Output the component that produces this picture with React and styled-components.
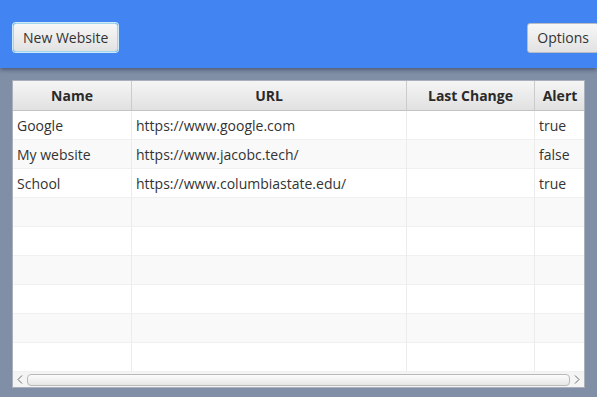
import React from "react";
import styled, { createGlobalStyle } from "styled-components";

const Global = createGlobalStyle`
  html, body { margin: 0; padding: 0; }
  body {
    width: 597px; height: 397px; overflow: hidden;
    background: #808ea6;
    font-family: "Open Sans", "Noto Sans", "Liberation Sans", sans-serif;
  }
`;

const Page = styled.div`
  width: 597px;
  height: 397px;
  overflow: hidden;
  display: flex;
  flex-direction: column;
`;

const TopBar = styled.div`
  height: 68px;
  flex: none;
  box-sizing: border-box;
  background: #4285f2;
  box-shadow: 0 2px 4px rgba(20, 30, 60, 0.45);
  display: flex;
  justify-content: space-between;
  align-items: flex-start;
  padding: 23px 0 0 13px;
  position: relative;
  z-index: 1;
`;

const Button = styled.button`
  height: ${(p) => (p.$focused ? "29px" : "30px")};
  box-sizing: border-box;
  padding: 0 9px;
  margin-right: ${(p) => (p.$edge ? "-2px" : "0")};
  font-family: inherit;
  font-size: 14px;
  color: #333;
  background: linear-gradient(#f7f7f7, #e2e2e2);
  border: 1px solid ${(p) => (p.$focused ? "#9fd8ee" : "#b9bcc2")};
  box-shadow: ${(p) => (p.$focused ? "0 0 0 1px #cfeaf6" : "none")};
  border-radius: 3px;
  line-height: 1;
`;

const Content = styled.div`
  flex: 1;
  padding: 12px 12px 10px 12px;
  display: flex;
`;

const Table = styled.div`
  flex: 1;
  background: #fff;
  border: 1px solid #a9b0bb;
  display: flex;
  flex-direction: column;
  overflow: hidden;
`;

const Viewport = styled.div`
  flex: 1;
  overflow: hidden;
`;

const Grid = styled.div`
  display: grid;
  grid-template-columns: 119px 275px 128px 51px;
  width: max-content;
`;

const HeadCell = styled.div`
  height: 30px;
  box-sizing: border-box;
  display: flex;
  align-items: center;
  justify-content: center;
  font-weight: 700;
  font-size: 14px;
  color: #2a2a2a;
  background: linear-gradient(#f5f5f5, #e1e1e1);
  border-right: 1px solid #cbcbcb;
  border-bottom: 1px solid #c3c3c3;
  white-space: nowrap;
`;

const Cell = styled.div`
  height: 29px;
  box-sizing: border-box;
  display: flex;
  align-items: center;
  padding-left: 4px;
  font-size: 14px;
  color: #333;
  background: ${(p) => (p.$odd ? "#f9f9f9" : "#ffffff")};
  border-right: 1px solid #ececec;
  border-bottom: 1px solid #f0f0f0;
  white-space: nowrap;
`;

const ScrollBar = styled.div`
  height: 15px;
  flex: none;
  display: flex;
  align-items: center;
  background: #f4f4f4;
`;

const Arrow = styled.div`
  width: 14px;
  height: 15px;
  display: flex;
  align-items: center;
  justify-content: center;
  flex: none;
`;

const Track = styled.div`
  flex: 1;
  height: 12px;
  box-sizing: border-box;
  border: 1px solid #b9b9b9;
  border-radius: 4px;
  background: linear-gradient(#fcfcfc, #e6e6e6);
`;

const Chevron = ({ dir }) => (
  <svg width="6" height="9" viewBox="0 0 6 9">
    <path
      d={dir === "left" ? "M5 0.5 L1 4.5 L5 8.5" : "M1 0.5 L5 4.5 L1 8.5"}
      fill="none"
      stroke="#6a6a6a"
      strokeWidth="1"
    />
  </svg>
);

const columns = ["Name", "URL", "Last Change", "Alert"];
const rows = [
  ["Google", "https://www.google.com", "", "true"],
  ["My website", "https://www.jacobc.tech/", "", "false"],
  ["School", "https://www.columbiastate.edu/", "", "true"],
  ...Array.from({ length: 6 }, () => ["", "", "", ""]),
];

export default function App() {
  return (
    <Page>
      <Global />
      <TopBar>
        <Button $focused>New Website</Button>
        <Button $edge>Options</Button>
      </TopBar>
      <Content>
        <Table>
          <Viewport>
            <Grid>
              {columns.map((c) => (
                <HeadCell key={c}>{c}</HeadCell>
              ))}
              {rows.map((r, i) =>
                r.map((v, j) => (
                  <Cell key={i + "-" + j} $odd={i % 2 === 1}>
                    {v}
                  </Cell>
                ))
              )}
            </Grid>
          </Viewport>
          <ScrollBar>
            <Arrow>
              <Chevron dir="left" />
            </Arrow>
            <Track />
            <Arrow>
              <Chevron dir="right" />
            </Arrow>
          </ScrollBar>
        </Table>
      </Content>
    </Page>
  );
}
